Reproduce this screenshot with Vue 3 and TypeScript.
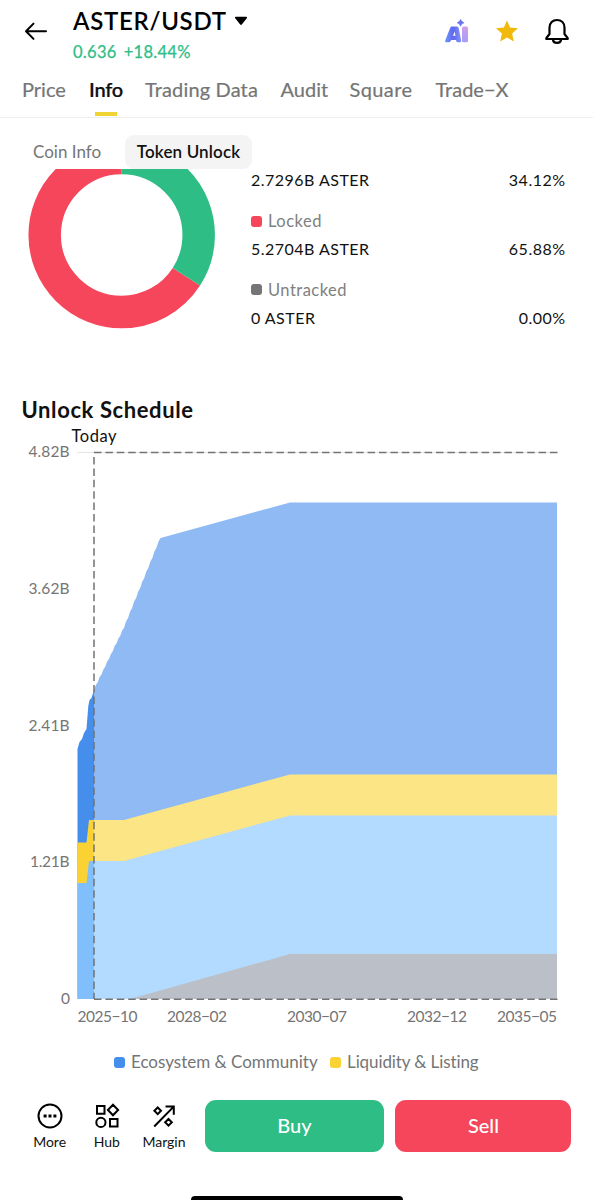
<script setup lang="ts">
interface Row { label: string; amount: string; share: string; tone: string }

const tabs = ['Price', 'Info', 'Trading Data', 'Audit', 'Square', 'Trade−X']
const activeTab = 'Info'

const rows: Row[] = [
  { label: 'Unlocked', amount: '2.7296B ASTER', share: '34.12%', tone: 'green' },
  { label: 'Locked', amount: '5.2704B ASTER', share: '65.88%', tone: 'red' },
  { label: 'Untracked', amount: '0 ASTER', share: '0.00%', tone: 'gray' },
]

const yTicks = [
  { text: '4.82B', y: 457, w: 41 },
  { text: '3.62B', y: 594, w: 41 },
  { text: '2.41B', y: 730.5, w: 41 },
  { text: '1.21B', y: 867, w: 39.5 },
  { text: '0', y: 1003.5, w: 8.5 },
]
const xTicks = [
  { text: '2025−10', x: 77.5 },
  { text: '2028−02', x: 167 },
  { text: '2030−07', x: 287 },
  { text: '2032−12', x: 407 },
  { text: '2035−05', x: 497 },
]

// Monthly unlocks make the upper edge climb in small steps.
function stairs(x0: number, y0: number, x1: number, y1: number, n: number): string {
  const out: string[] = []
  const dx = (x1 - x0) / n
  const dy = (y1 - y0) / n
  for (let i = 0; i < n; i++) {
    out.push(`${(x0 + dx * (i + 0.5)).toFixed(1)},${(y0 + dy * (i + 0.66)).toFixed(1)}`)
    out.push(`${(x0 + dx * (i + 1)).toFixed(1)},${(y0 + dy * (i + 1)).toFixed(1)}`)
  }
  return out.join(' ')
}
const ecosystem =
  '77.5,749 79.5,742 82,739 84,733 86.5,729 88.3,706 89.5,700 91.5,698 94,690 ' +
  stairs(94, 690, 124, 628, 8) + ' ' + stairs(124, 628, 160.5, 538, 9) +
  ' 290,502.5 557,502.5 557,999 77.5,999'
</script>

<template>
  <div class="screen">
    <header class="header">
      <div class="topbar">
        <svg class="back" viewBox="0 0 24 20" fill="none"><path d="M22 10.3H2.500M9.5 2.6 2 10.3l7.500 7.600" /></svg>
        <div class="pair">
          <div class="pair-name"><span>ASTER/USDT</span>
            <svg class="caret" viewBox="0 0 14 10"><path d="M1.8.8h10.4c.8 0 1.1.8.6 1.4L7.8 8.5c-.5.6-1.1.6-1.6 0L1.2 2.2C.7 1.6 1 .8 1.8.8Z" /></svg>
          </div>
          <div class="pair-price"><span>0.636</span><span class="change">+18.44%</span></div>
        </div>
        <div class="actions">
          <svg class="ai" viewBox="0 0 26 26">
            <defs>
              <linearGradient id="ai" x1="0" y1="0" x2="1" y2="0">
                <stop offset="0" stop-color="#6a9cf8" /><stop offset=".5" stop-color="#6266ee" />
                <stop offset="1" stop-color="#7f98f8" />
              </linearGradient>
              <linearGradient id="ai-bar" x1="0" y1="0" x2="0" y2="1">
                <stop offset="0" stop-color="#cf9fee" /><stop offset="1" stop-color="#a99cf5" />
              </linearGradient>
            </defs>
            <path fill="url(#ai)" fill-rule="evenodd" d="M8 8.500h4.800q1.500 0 1.800 1.300L17.200 22.500q.4 1.800-1.200 1.800h-2.200q-1.300 0-1.500-1.400l-.2-1H7.300l-.7 1.200Q6 24.300 4.700 24.300H2.200Q.4 24.300 1.200 22.500L6.300 9.600Q6.800 8.500 8 8.500ZM10.600 13.600 9 17.800h2.500Z" />
            <rect x="18" y="8.500" width="6" height="15.800" rx="1.600" fill="url(#ai-bar)" />
            <path d="M16.600 1.300q.8 2.700 3.500 3.500-2.700.8-3.500 3.500-.8-2.700-3.500-3.500 2.700-.8 3.500-3.500Z" fill="#6d74ed" stroke="#6d74ed" stroke-width=".5" />
          </svg>
          <svg class="star" viewBox="0 0 26 26"><path d="m13 2.500 3.100 7 7.900.8-5.900 5.300 1.700 7.900L13 19.500l-6.800 4 1.700-7.900L2 10.300l7.900-.8Z" /></svg>
          <svg class="bell" viewBox="0 0 26 26" fill="none"><path d="M5.500 16V9.700C5.500 4.900 8.700 2 13 2s7.500 2.900 7.500 7.700V16l3.200 4.200v.8H2.300v-.8L5.500 16Z" /><path d="M8.900 21.300c.2 2.500 1.800 3.500 4.100 3.500s3.900-1 4.100-3.500" /></svg>
        </div>
      </div>
      <nav class="tabs">
        <span v-for="(t, i) in tabs" :key="t" class="tab" :class="['tab-' + i, { active: t === activeTab }]">{{ t }}</span>
      </nav>
    </header>

    <div class="subtabs">
      <span class="sub">Coin Info</span>
      <span class="sub selected">Token Unlock</span>
    </div>

    <section class="summary">
      <svg class="donut" viewBox="28 169 188 160">
        <circle cx="121.700" cy="235" r="77" class="arc locked" pathLength="100" stroke-dasharray="65.88 34.12" stroke-dashoffset="-34.12" transform="rotate(-90 121.7 235)" />
        <circle cx="121.700" cy="235" r="77" class="arc unlocked" pathLength="100" stroke-dasharray="34.12 65.88" transform="rotate(-90 121.7 235)" />
      </svg>
      <div class="rows">
        <div v-for="(r, i) in rows" :key="r.label" class="row">
          <div v-if="i > 0" class="key"><i class="dot" :class="r.tone" />{{ r.label }}</div>
          <div class="values"><span>{{ r.amount }}</span><span class="share">{{ r.share }}</span></div>
        </div>
      </div>
    </section>

    <h2 class="heading"><span>Unlock Schedule</span></h2>

    <svg class="chart" viewBox="0 425 593 615">
      <defs>
        <clipPath id="past"><rect x="77" y="425" width="17" height="575" /></clipPath>
        <clipPath id="future"><rect x="94" y="425" width="464" height="575" /></clipPath>
      </defs>
      <line x1="77" x2="557" y1="452.500" y2="452.500" class="grid" />
      <g v-for="p in ['past', 'future']" :key="p" :class="p" :clip-path="`url(#${p})`">
        <polygon class="eco" :points="ecosystem" />
        <polygon class="liq" points="77.500,842.500 86.500,842.500 89,820 124,820 290,774.500 557,774.500 557,999 77.500,999" />
        <polygon class="air" points="77.500,883 86.500,883 89,861 124,861 290,815.500 557,815.500 557,999 77.500,999" />
        <polygon class="team" points="130,999 290,954 557,954 557,999" />
      </g>
      <path class="dash" d="M94 452.500H557.500M94 457V999" />
      <path class="dash" d="M94 999.300H557.500" />
      <text x="71.500" y="442" class="today" textLength="45">Today</text>
      <text v-for="t in yTicks" :key="t.text" :x="69.5 - t.w" :y="t.y" :textLength="t.w">{{ t.text }}</text>
      <text v-for="t in xTicks" :key="t.text" :x="t.x" y="1022" textLength="60">{{ t.text }}</text>
    </svg>

    <div class="legend">
      <span class="item eco-text"><i class="dot blue" />Ecosystem &amp; Community</span>
      <span class="item liq-text"><i class="dot yellow" />Liquidity &amp; Listing</span>
    </div>

    <footer class="footer">
      <div class="tool more">
        <svg viewBox="0 0 26 26" fill="none"><circle cx="13" cy="13" r="11.500" /><path class="fill" d="M6.600 11.500h3v3h-3zM11.500 11.500h3v3h-3zM16.400 11.500h3v3h-3z" /></svg>
        <span>More</span>
      </div>
      <div class="tool hub">
        <svg viewBox="0 0 26 26" fill="none"><path d="M3 3h7.500v7.800H3zM16 16h7.500v7.500H16zM19 1.800l5.100 5.200-5.100 5.200L13.900 7z" /><circle cx="6.900" cy="19.400" r="4.600" /></svg>
        <span>Hub</span>
      </div>
      <div class="tool margin">
        <svg viewBox="0 0 26 26" fill="none"><path d="M3.200 23.500 22.700 3.600M14.500 3.500h8.300v8.300M6.700 4.500 10 7.800l-3.300 3.300-3.300-3.300zM17.500 16l3.300 3.300-3.300 3.300-3.300-3.300z" /></svg>
        <span>Margin</span>
      </div>
      <button class="cta buy">Buy</button>
      <button class="cta sell">Sell</button>
    </footer>
    <div class="home" />
  </div>
</template>

<style>
body { margin: 0; background: #fff; }
</style>
<style scoped>
.screen { width: 593px; height: 1200px; overflow: hidden; display: flex; flex-direction: column; background: #fff; color: #111; font-family: Lato, "Open Sans", sans-serif; font-size: 16px; font-variant-ligatures: none; }
.header { height: 117px; border-bottom: 1px solid #eee; box-sizing: content-box; flex: none; display: flex; flex-direction: column; }
.topbar { height: 72px; display: flex; padding: 0 23px 0 24px; }
.back { width: 24px; height: 20px; margin-top: 21px; stroke: #000; stroke-width: 2; stroke-linecap: round; stroke-linejoin: round; }
.pair { margin-left: 25px; padding-top: 6px; }
.pair-name { height: 29px; line-height: 29px; font-size: 24px; letter-spacing: .7px; font-weight: 600; color: #000; display: flex; align-items: center; white-space: nowrap; }
.caret { width: 14px; height: 10px; margin-left: 7.500px; }
.pair-price { margin-top: 6px; line-height: 22px; font-size: 16.500px; letter-spacing: .3px; color: #2ebd85; -webkit-text-stroke: .25px #2ebd85; }
.change { margin-left: 7px; }
.actions { margin-left: auto; display: flex; gap: 24px; padding-top: 18px; }
.actions svg { width: 26px; height: 26px; overflow: visible; }
.star { fill: #f0b90b; }
.bell { stroke: #000; stroke-width: 2.200; stroke-linejoin: round; }
.tabs { display: flex; padding: 0 22px; flex: 1; line-height: 35px; font-size: 20px; color: #757575; white-space: nowrap; }
.tab { position: relative; -webkit-text-stroke: .2px currentColor; }
.tab-0 { width: 67px; }
.tab-1 { width: 34px; margin-right: 22px; letter-spacing: -.2px; }
.tab-2 { width: 135.500px; letter-spacing: .15px; }
.tab-3 { width: 69px; }
.tab-4 { width: 86px; letter-spacing: .4px; }
.tab.active { color: #111; font-weight: 600; }
.tab.active::after { content: ""; position: absolute; left: 6px; width: 22px; bottom: 1px; height: 4px; background: #f0d435; }
.subtabs { flex: none; height: 34px; padding: 17px 0 0 33px; display: flex; line-height: 34px; font-size: 17px; color: #757575; white-space: nowrap; }
.sub { width: 92px; }
.sub.selected { width: 127px; border-radius: 9px; background: #f4f4f4; color: #111; font-weight: 600; text-align: center; font-size: 17px; letter-spacing: .15px; }
.summary { flex: none; height: 160px; display: flex; padding: 0 28px; }
.donut { width: 188px; height: 160px; flex: none; }
.arc { fill: none; stroke-width: 32.500; }
.locked { stroke: #f5465c; }
.unlocked { stroke: #2ebd85; }
.rows { margin-left: 35px; margin-top: -1px; flex: 1; color: #111; letter-spacing: .48px; }
.row { height: 68.700px; }
.row:first-child { height: 41px; }
.key { height: 24px; line-height: 24px; display: flex; align-items: center; color: #808080; font-size: 16.500px; }
.values { display: flex; justify-content: space-between; line-height: 24px; }
.share { margin-right: -.48px; }
.key + .values { padding-top: 4px; }
.dot { width: 11px; height: 11px; border-radius: 3px; margin-right: 6px; flex: none; }
.green { background: #2ebd85; }
.red { background: #f5465c; }
.gray { background: #757575; }
.blue { background: #458eec; }
.yellow { background: #fad234; }
.heading { flex: none; box-sizing: border-box; height: 96px; margin: 0; padding: 66px 0 0 21.500px; line-height: 29px; font-size: 22px; letter-spacing: .6px; font-weight: 700; }
.chart { flex: none; width: 593px; height: 615px; font-size: 15.500px; fill: #757575; }
.today { fill: #111; font-size: 16.500px; }
.grid { stroke: #e5e5e5; }
.dash { fill: none; stroke: #737373; stroke-width: 1.500; stroke-dasharray: 7.500 3.900; }
.past .eco { fill: #458eec; }
.past .liq { fill: #fad234; }
.past .air { fill: #80bffb; }
.future .eco { fill: #8fbaf4; }
.future .liq { fill: #fce584; }
.future .air { fill: #b3daff; }
.team { fill: #bbc0c8; }
.legend { flex: none; height: 24px; margin-top: 10px; padding-left: 114px; display: flex; line-height: 24px; font-size: 17px; color: #757575; white-space: nowrap; }
.item { display: flex; align-items: center; }
.eco-text { width: 216px; }
.liq-text { letter-spacing: -.1px; }
.footer { flex: none; margin-top: 26px; height: 52px; display: flex; padding: 0 21px 0 21px; }
.tool { width: 57.200px; display: flex; flex-direction: column; align-items: center; font-size: 14px; line-height: 20px; color: #111; }
.tool svg { width: 26px; height: 26px; margin: 3px 0 3px; stroke: #000; stroke-width: 2; }
.tool .fill { fill: #000; stroke: none; }
.cta { border: 0; border-radius: 11px; padding: 0 0 2px; height: 52px; color: #fff; font-family: inherit; font-size: 20px; font-weight: 500; }
.buy { width: 179px; background: #2ebd85; margin-left: 12.400px; }
.sell { width: 176px; background: #f5465c; margin-left: 11.500px; }
.home { flex: none; width: 212px; height: 8px; border-radius: 4px; background: #000; margin: 44px auto 0; }
</style>
